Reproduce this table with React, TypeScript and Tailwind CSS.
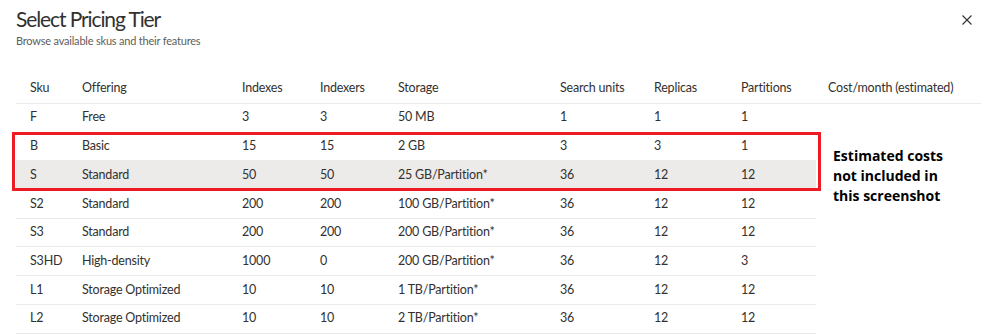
const rows = [
  ["F", "Free", "3", "3", "50 MB", "1", "1", "1"],
  ["B", "Basic", "15", "15", "2 GB", "3", "3", "1"],
  ["S", "Standard", "50", "50", "25 GB/Partition*", "36", "12", "12"],
  ["S2", "Standard", "200", "200", "100 GB/Partition*", "36", "12", "12"],
  ["S3", "Standard", "200", "200", "200 GB/Partition*", "36", "12", "12"],
  ["S3HD", "High-density", "1000", "0", "200 GB/Partition*", "36", "12", "3"],
  ["L1", "Storage Optimized", "10", "10", "1 TB/Partition*", "36", "12", "12"],
  ["L2", "Storage Optimized", "10", "10", "2 TB/Partition*", "36", "12", "12"],
];

const headers = ["Sku", "Offering", "Indexes", "Indexers", "Storage", "Search units", "Replicas", "Partitions", "Cost/month (estimated)"];

function Row({ cells, shaded }: { cells: string[]; shaded?: boolean }) {
  return (
    <div
      className={`grid h-[28.7px] grid-cols-[52px_160px_78px_78px_162px_94px_87px_1fr] items-center border-b border-[#edebe9] pl-[14px] ${
        shaded ? "bg-[#edebe9]" : ""
      }`}
    >
      {cells.map((c, i) => (
        <span key={i} className="whitespace-nowrap">
          {c}
        </span>
      ))}
    </div>
  );
}

export default function App() {
  return (
    <div className="h-[335px] w-[986px] overflow-hidden bg-white font-['Lato','Liberation_Sans',sans-serif] text-[12.5px] tracking-[-0.2px] text-[#323130]">
      <div className="flex justify-between pl-[16px] pr-[14px] pt-[4px]">
        <div>
          <h1 className="text-[21px] leading-[30px] tracking-[-1.1px] text-[#323130]">Select Pricing Tier</h1>
          <p className="text-[11px] leading-[14px] tracking-[-0.2px] text-[#605e5c]">Browse available skus and their features</p>
        </div>
        <button type="button" className="mt-[11px] h-[10px] w-[10px] text-[#323130]">
          <svg viewBox="0 0 10 10" className="h-[10px] w-[10px]" fill="none" stroke="currentColor" strokeWidth="1.1">
            <path d="M0.5 0.5 L9.5 9.5 M9.5 0.5 L0.5 9.5" />
          </svg>
        </button>
      </div>

      <div className="ml-[16px] mr-[5px] mt-[26px]">
        <div className="grid h-[30px] grid-cols-[52px_160px_78px_78px_162px_94px_87px_87px_1fr] items-center border-b border-[#edebe9] pl-[14px]">
          {headers.map((h) => (
            <span key={h} className="whitespace-nowrap">
              {h}
            </span>
          ))}
        </div>

        <div className="flex">
          <div className="w-[800px]">
            <Row cells={rows[0]} />
            <div className="relative">
              <Row cells={rows[1]} />
              <Row cells={rows[2]} shaded />
              <div className="pointer-events-none absolute -bottom-[1px] -left-[4px] -right-[5px] -top-[1px] border-[3px] border-[#ed1c24]" />
            </div>
            {rows.slice(3).map((r) => (
              <Row key={r[0]} cells={r} />
            ))}
          </div>
          <p className="ml-[17px] mt-[42px] font-['Open_Sans',sans-serif] text-[14px] font-bold leading-[20px] tracking-normal text-black">
            Estimated costs
            <br />
            not included in
            <br />
            this screenshot
          </p>
        </div>
      </div>
    </div>
  );
}
